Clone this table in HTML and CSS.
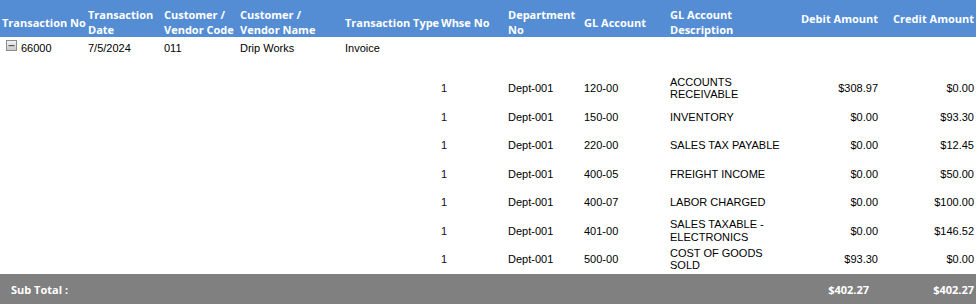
FILE: index.html
```html
<!DOCTYPE html>
<html>
<head>
<meta charset="utf-8">
<link rel="stylesheet" href="styles.css">
</head>
<body>
<table class="grid">
  <colgroup>
    <col class="c1"><col class="c2"><col class="c3"><col class="c4"><col class="c5"><col class="c6"><col class="c7"><col class="c8"><col class="c9"><col class="c10"><col class="c11">
  </colgroup>
  <thead>
    <tr class="head">
      <th>Transaction No</th>
      <th>Transaction<br>Date</th>
      <th>Customer /<br>Vendor Code</th>
      <th>Customer /<br>Vendor Name</th>
      <th>Transaction Type</th>
      <th>Whse No</th>
      <th>Department<br>No</th>
      <th>GL Account</th>
      <th>GL Account<br>Description</th>
      <th class="num">Debit Amount</th>
      <th class="num">Credit Amount</th>
    </tr>
  </thead>
  <tbody>
    <tr class="master">
      <td class="first"><span class="toggle"><svg width="11" height="11" viewBox="0 0 11 11"><defs><linearGradient id="g" x1="0" y1="0" x2="0" y2="1"><stop offset="0" stop-color="#f4f4f4"/><stop offset="1" stop-color="#c8c8c8"/></linearGradient></defs><rect x="0.5" y="0.5" width="10" height="10" fill="url(#g)" stroke="#8c8c8c"/><rect x="2.5" y="5" width="6" height="1.2" fill="#5a5a5a"/></svg></span>66000</td>
      <td>7/5/2024</td>
      <td>011</td>
      <td>Drip Works</td>
      <td>Invoice</td>
      <td></td><td></td><td></td><td></td><td></td><td></td>
    </tr>
    <tr class="detail">
      <td></td><td></td><td></td><td></td><td></td>
      <td class="whse">1</td><td>Dept-001</td><td>120-00</td><td class="desc">ACCOUNTS<br>RECEIVABLE</td><td class="num">$308.97</td><td class="num">$0.00</td>
    </tr>
    <tr class="detail">
      <td></td><td></td><td></td><td></td><td></td>
      <td class="whse">1</td><td>Dept-001</td><td>150-00</td><td class="desc">INVENTORY</td><td class="num">$0.00</td><td class="num">$93.30</td>
    </tr>
    <tr class="detail">
      <td></td><td></td><td></td><td></td><td></td>
      <td class="whse">1</td><td>Dept-001</td><td>220-00</td><td class="desc">SALES TAX PAYABLE</td><td class="num">$0.00</td><td class="num">$12.45</td>
    </tr>
    <tr class="detail">
      <td></td><td></td><td></td><td></td><td></td>
      <td class="whse">1</td><td>Dept-001</td><td>400-05</td><td class="desc">FREIGHT INCOME</td><td class="num">$0.00</td><td class="num">$50.00</td>
    </tr>
    <tr class="detail">
      <td></td><td></td><td></td><td></td><td></td>
      <td class="whse">1</td><td>Dept-001</td><td>400-07</td><td class="desc">LABOR CHARGED</td><td class="num">$0.00</td><td class="num">$100.00</td>
    </tr>
    <tr class="detail">
      <td></td><td></td><td></td><td></td><td></td>
      <td class="whse">1</td><td>Dept-001</td><td>401-00</td><td class="desc">SALES TAXABLE -<br>ELECTRONICS</td><td class="num">$0.00</td><td class="num">$146.52</td>
    </tr>
    <tr class="detail">
      <td></td><td></td><td></td><td></td><td></td>
      <td class="whse">1</td><td>Dept-001</td><td>500-00</td><td class="desc">COST OF GOODS<br>SOLD</td><td class="num">$93.30</td><td class="num">$0.00</td>
    </tr>
  </tbody>
  <tfoot>
    <tr class="subtotal">
      <td colspan="9" class="label">Sub Total :</td>
      <td class="num debit">$402.27</td>
      <td class="num">$402.27</td>
    </tr>
  </tfoot>
</table>
</body>
</html>
```

FILE: styles.css
```css
html, body {
  margin: 0;
  padding: 0;
  background: #ffffff;
}

.grid {
  width: 976px;
  table-layout: fixed;
  border-collapse: collapse;
  border-spacing: 0;
  font-family: "Liberation Sans", Arial, sans-serif;
  font-size: 11px;
  color: #000000;
}

.c1 { width: 86px; }
.c2 { width: 76px; }
.c3 { width: 76px; }
.c4 { width: 105px; }
.c5 { width: 96px; }
.c6 { width: 67px; }
.c7 { width: 76px; }
.c8 { width: 86px; }
.c9 { width: 112px; }
.c10 { width: 100px; }
.c11 { width: 96px; }

.grid th,
.grid td {
  padding: 0 0 0 2px;
  white-space: nowrap;
  text-align: left;
}

.grid .num {
  text-align: right;
  padding: 0 2px 0 0;
}

.head {
  background: #548dd4;
  height: 37px;
}

.head th {
  font-family: "Open Sans", "DejaVu Sans", sans-serif;
  font-weight: 700;
  font-size: 11px;
  line-height: 15px;
  color: #ffffff;
  vertical-align: middle;
  padding-top: 7px;
  padding-bottom: 0;
}

.master {
  height: 37px;
}

.master td {
  vertical-align: top;
  padding-top: 5px;
  line-height: 13px;
}

.master td.first {
  padding-left: 6px;
}

.toggle {
  display: inline-block;
  width: 11px;
  height: 11px;
  margin-right: 4px;
  vertical-align: top;
  margin-top: -2px;
}

.toggle svg {
  display: block;
}

.detail {
  height: 28.5px;
}

.detail td {
  vertical-align: middle;
  line-height: 12.5px;
}

.detail td.whse {
  color: #1a0a26;
}

.subtotal {
  background: #808080;
  height: 32px;
}

.subtotal td {
  font-family: "Open Sans", "DejaVu Sans", sans-serif;
  font-weight: 700;
  font-size: 11px;
  color: #ffffff;
  vertical-align: middle;
  padding-bottom: 1px;
}

.subtotal td.label {
  padding-left: 11px;
}

.subtotal td.debit {
  padding-right: 11px;
}
```
